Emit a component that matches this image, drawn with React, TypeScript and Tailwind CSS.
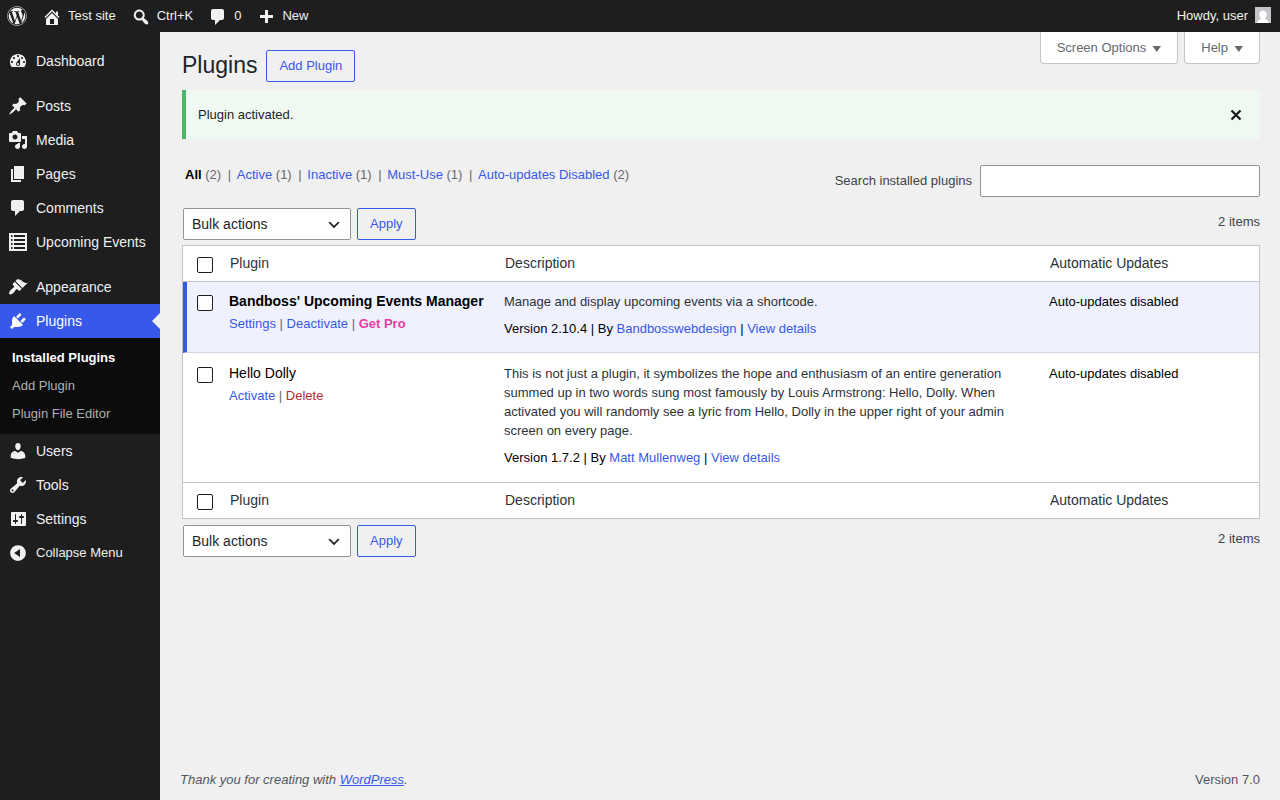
import type { ReactNode } from "react";
import { FaWordpress } from "react-icons/fa";

const ICONS = {
  dashboard:
    "M3.76 16h12.48c1.1-1.37 1.76-3.11 1.76-5 0-4.42-3.58-8-8-8s-8 3.58-8 8c0 1.89.66 3.63 1.76 5zM10 4c.55 0 1 .45 1 1s-.45 1-1 1-1-.45-1-1 .45-1 1-1zM6 6c.55 0 1 .45 1 1s-.45 1-1 1-1-.45-1-1 .45-1 1-1zm8 0c.55 0 1 .45 1 1s-.45 1-1 1-1-.45-1-1 .45-1 1-1zm-5.37 5.55L12 7v6c0 1.1-.9 2-2 2s-2-.9-2-2c0-.57.24-1.08.63-1.45zM4 10c.55 0 1 .45 1 1s-.45 1-1 1-1-.45-1-1 .45-1 1-1zm12 0c.55 0 1 .45 1 1s-.45 1-1 1-1-.45-1-1 .45-1 1-1zm-5 3c0-.55-.45-1-1-1s-1 .45-1 1 .45 1 1 1 1-.45 1-1z",
  post: "M10.44 3.02l1.82-1.82 6.36 6.35-1.83 1.82c-1.05-.68-2.48-.57-3.41.36l-.75.75c-.92.93-1.04 2.35-.35 3.41l-1.83 1.82-2.41-2.41-2.8 2.79c-.42.42-3.38 2.71-3.8 2.29s1.86-3.39 2.28-3.81l2.79-2.79L4.1 9.36l1.83-1.82c1.05.69 2.48.57 3.4-.36l.75-.75c.93-.92 1.05-2.35.36-3.41z",
  media:
    "M13 11V4c0-.55-.45-1-1-1h-1.67L9 1H5L3.67 3H2c-.55 0-1 .45-1 1v7c0 .55.45 1 1 1h10c.55 0 1-.45 1-1zM7 4.5c1.38 0 2.5 1.12 2.5 2.5S8.38 9.5 7 9.5 4.5 8.38 4.5 7 5.62 4.5 7 4.5zM14 6h5v10.5c0 1.38-1.12 2.5-2.5 2.5S14 17.88 14 16.5s1.12-2.5 2.5-2.5c.17 0 .34.02.5.05V9h-3V6zm-4 8.05V13h2v3.5c0 1.38-1.12 2.5-2.5 2.5S7 17.88 7 16.5 8.12 14 9.5 14c.17 0 .34.02.5.05z",
  page: "M6 15V2h10v13H6zm-1 1h8v2H3V5h2v11z",
  comments: "M5 2h9c1.1 0 2 .9 2 2v7c0 1.1-.9 2-2 2h-2l-5 5v-5H5c-1.1 0-2-.9-2-2V4c0-1.1.9-2 2-2z",
  list: "M1 1h18v18H1zM3 3v2h1.500V3zM6 3v2h11V3zM3 7v2h1.500V7zM6 7v2h11V7zM3 11v2h1.500v-2zM6 11v2h11v-2zM3 15v2h1.500v-2zM6 15v2h11v-2z",
  appearance:
    "M14.48 11.06L7.41 3.99l1.5-1.5c.5-.56 2.3-.47 3.51.32 1.21.8 1.43 1.28 2.91 2.1 1.18.64 2.45 1.26 4.45.85zm-.71.71L6.7 4.7 4.93 6.47c-.39.39-.39 1.02 0 1.41l1.06 1.06c.39.39.39 1.03 0 1.42-.6.6-1.43 1.11-2.21 1.69-.35.26-.7.53-1.01.84C1.43 14.23.4 16.08 1.4 17.07c.99 1 2.84-.03 4.18-1.36.31-.31.58-.66.85-1.02.57-.78 1.08-1.61 1.69-2.21.39-.39 1.02-.39 1.41 0l1.06 1.06c.39.39 1.02.39 1.41 0z",
  plugins:
    "M13.11 4.36L9.87 7.6 8 5.73l3.24-3.24c.35-.34 1.05-.2 1.56.32.52.51.66 1.21.31 1.55zm-8 1.77l.91-1.12 9.01 9.01-1.19.84c-.71.71-2.63 1.16-3.82 1.16H6.14L4.9 17.26c-.59.59-1.54.59-2.12 0-.59-.58-.59-1.53 0-2.12l1.24-1.24v-3.88c0-1.13.4-3.19 1.09-3.89zm7.26 3.97l3.24-3.24c.34-.35 1.04-.21 1.55.31.52.51.66 1.21.31 1.55l-3.24 3.25z",
  users:
    "M10 9.25c-2.27 0-2.73-3.44-2.73-3.44C7 4.02 7.82 2 9.97 2c2.16 0 2.98 2.02 2.71 3.81 0 0-.41 3.44-2.68 3.44zm0 2.57L12.72 10c2.39 0 4.52 2.33 4.52 4.53v2.49s-3.65 1.13-7.24 1.13c-3.65 0-7.24-1.13-7.24-1.13v-2.49c0-2.25 1.94-4.48 4.47-4.48z",
  tools:
    "M16.68 9.77c-1.34 1.34-3.3 1.67-4.95.99l-5.41 6.52c-.99.99-2.59.99-3.58 0s-.99-2.59 0-3.57l6.52-5.42c-.68-1.65-.35-3.61.99-4.95 1.28-1.28 3.12-1.62 4.72-1.06l-2.89 2.89 2.82 2.82 2.86-2.87c.53 1.58.18 3.39-1.08 4.65zM3.81 16.21c.4.39 1.04.39 1.43 0 .4-.4.4-1.04 0-1.43-.39-.4-1.03-.4-1.43 0-.39.39-.39 1.03 0 1.43z",
  settings:
    "M18 16V4c0-.55-.45-1-1-1H4c-.55 0-1 .45-1 1v12c0 .55.45 1 1 1h13c.55 0 1-.45 1-1zM8 11h1c.55 0 1 .45 1 1s-.45 1-1 1H8v1.5c0 .28-.22.5-.5.5s-.5-.22-.5-.5V13H6c-.55 0-1-.45-1-1s.45-1 1-1h1V5.500c0-.28.22-.5.5-.5s.5.22.5.5V11zm5-2h-1c-.55 0-1-.45-1-1s.45-1 1-1h1V5.500c0-.28.22-.5.5-.5s.5.22.5.5V7h1c.55 0 1 .45 1 1s-.45 1-1 1h-1v5.500c0 .28-.22.5-.5.5s-.5-.22-.5-.5V9z",
  collapse:
    "M10 2.16c4.33 0 7.84 3.51 7.84 7.84s-3.51 7.84-7.84 7.84S2.16 14.33 2.16 10 5.71 2.16 10 2.16zm2 11.72V6.12L6.18 9.97z",
  home: "M16 8.5l1.53 1.53-1.06 1.06L10 4.6l-6.47 6.49-1.06-1.06L10 2.5l4 4v-2h2v4zm-6-2.46l6 5.99V18H4v-5.97zM12 17v-5H8v5h4z",
  search:
    "M12.14 4.18c1.87 1.87 2.11 4.75.72 6.89.12.1.22.21.36.31.2.16.47.36.81.59.34.24.56.39.66.47.42.31.73.57.94.78.32.32.6.65.84 1 .25.35.44.69.59 1.04.14.35.21.68.18 1-.02.32-.14.59-.36.81s-.49.34-.81.36c-.31.02-.65-.04-.99-.19-.35-.14-.7-.34-1.04-.59-.35-.24-.68-.52-1-.84-.21-.21-.47-.52-.77-.93-.1-.13-.25-.35-.47-.66-.22-.32-.4-.57-.56-.78-.16-.2-.29-.35-.44-.5-2.07 1.09-4.69.76-6.44-.98-2.14-2.15-2.14-5.64 0-7.78 2.15-2.15 5.63-2.15 7.78 0zm-1.41 6.36c1.36-1.37 1.36-3.58 0-4.95-1.37-1.37-3.59-1.37-4.95 0-1.37 1.37-1.37 3.58 0 4.95 1.36 1.37 3.58 1.37 4.95 0z",
  plus: "M17 8v3h-5v5H9v-5H4V8h5V3h3v5h5z",
};

type IconName = keyof typeof ICONS;

const MENU_GROUPS: { label: string; icon: IconName }[][] = [
  [{ label: "Dashboard", icon: "dashboard" }],
  [
    { label: "Posts", icon: "post" },
    { label: "Media", icon: "media" },
    { label: "Pages", icon: "page" },
    { label: "Comments", icon: "comments" },
    { label: "Upcoming Events", icon: "list" },
  ],
  [
    { label: "Appearance", icon: "appearance" },
    { label: "Plugins", icon: "plugins" },
    { label: "Users", icon: "users" },
    { label: "Tools", icon: "tools" },
    { label: "Settings", icon: "settings" },
  ],
];

const SUBMENU = ["Installed Plugins", "Add Plugin", "Plugin File Editor"];

const TOOLBAR: { label: string; icon: IconName }[] = [
  { label: "Test site", icon: "home" },
  { label: "Ctrl+K", icon: "search" },
  { label: "0", icon: "comments" },
  { label: "New", icon: "plus" },
];

const FILTERS = [
  { label: "All", count: 2 },
  { label: "Active", count: 1 },
  { label: "Inactive", count: 1 },
  { label: "Must-Use", count: 1 },
  { label: "Auto-updates Disabled", count: 2 },
];

const PLUGINS = [
  {
    name: "Bandboss' Upcoming Events Manager",
    active: true,
    actions: [
      { label: "Settings", color: "text-[#3858e9]" },
      { label: "Deactivate", color: "text-[#3858e9]" },
      { label: "Get Pro", color: "font-bold text-[#eb3aa3]" },
    ],
    description: "Manage and display upcoming events via a shortcode.",
    version: "2.10.4",
    author: "Bandbosswebdesign",
  },
  {
    name: "Hello Dolly",
    active: false,
    actions: [
      { label: "Activate", color: "text-[#3858e9]" },
      { label: "Delete", color: "text-[#b32d2e]" },
    ],
    description:
      "This is not just a plugin, it symbolizes the hope and enthusiasm of an entire generation summed up in two words sung most famously by Louis Armstrong: Hello, Dolly. When activated you will randomly see a lyric from Hello, Dolly in the upper right of your admin screen on every page.",
    version: "1.7.2",
    author: "Matt Mullenweg",
  },
];

function Icon({ name }: { name: IconName }) {
  return (
    <svg viewBox="0 0 20 20" className="size-5 shrink-0" fill="currentColor" fillRule="evenodd" aria-hidden="true">
      <path d={ICONS[name]} />
    </svg>
  );
}

function Link({ children, className = "text-[#3858e9]" }: { children: ReactNode; className?: string }) {
  return (
    <a href="#" className={className}>
      {children}
    </a>
  );
}

function Checkbox({ label }: { label: string }) {
  return (
    <input
      type="checkbox"
      aria-label={label}
      className="block size-4 appearance-none rounded-xs border border-[#1e1e1e] bg-white checked:bg-[#3858e9]"
    />
  );
}

function BulkActions() {
  return (
    <div className="flex items-start justify-between pl-px">
      <div className="flex gap-1.5">
        <div className="relative">
          <select
            aria-label="Select bulk action"
            className="h-8 w-42 appearance-none rounded-xs border border-[#949494] bg-white px-2 text-sm text-[#1e1e1e]"
          >
            <option>Bulk actions</option>
            <option>Activate</option>
            <option>Deactivate</option>
            <option>Update</option>
            <option>Delete</option>
          </select>
          <svg
            viewBox="0 0 20 20"
            className="pointer-events-none absolute top-[9px] right-[9px] size-4"
            fill="#1e1e1e"
            aria-hidden="true"
          >
            <path d="M5 6l5 5 5-5 2 1-7 7-7-7 2-1z" />
          </svg>
        </div>
        <button className="h-8 rounded-xs border border-[#3858e9] px-3 text-[#3858e9]">Apply</button>
      </div>
      <span className="pt-1 leading-5 text-[#3c434a]">2 items</span>
    </div>
  );
}

function HeadingRow({ position }: { position: "top" | "bottom" }) {
  const border = position === "top" ? "border-b border-[#c3c4c7]" : "border-t border-[#c3c4c7]";

  return (
    <tr className="h-9 align-top text-sm text-[#2c3338]">
      <td className={`pt-[11px] pl-3.5 ${border}`}>
        <Checkbox label={`Select all (${position})`} />
      </td>
      <th scope="col" className={`pt-[7px] pl-[9px] text-left font-normal ${border}`}>
        Plugin
      </th>
      <th scope="col" className={`pt-[7px] pl-[9px] text-left font-normal ${border}`}>
        Description
      </th>
      <th scope="col" className={`pt-[7px] pl-[9px] text-left font-normal ${border}`}>
        Automatic Updates
      </th>
    </tr>
  );
}

function ScreenTab({ children }: { children: ReactNode }) {
  return (
    <button className="flex h-8 items-center gap-1.5 rounded-b-sm border border-t-0 border-[#c3c4c7] bg-white px-4 text-[#646970]">
      {children}
      <svg viewBox="0 0 9 6" className="mt-0.5 h-1.5 w-[9px]" fill="currentColor" aria-hidden="true">
        <path d="M.5 0h8.500L4.800 6z" />
      </svg>
    </button>
  );
}

function Toolbar() {
  return (
    <header className="flex h-8 items-center justify-between bg-[#1e1e1e] pr-2 pl-[7px] text-[#f0f0f0]">
      <nav className="flex items-center gap-[15px]" aria-label="Toolbar">
        <a href="#" aria-label="About WordPress">
          <FaWordpress className="size-5" />
        </a>
        {TOOLBAR.map((item) => (
          <a key={item.label} href="#" className="flex items-center gap-1.5">
            <span className="pt-0.5">
              <Icon name={item.icon} />
            </span>
            {item.label}
          </a>
        ))}
      </nav>
      <a href="#" className="flex items-center gap-1.5">
        Howdy, user
        <svg viewBox="0 0 18 18" className="size-[18px]" aria-hidden="true">
          <path d="M1 0h16v16H1z" fill="#c3c4c7" />
          <path
            d="M9 3.500c2.300 0 3.800 1.700 3.800 4 0 1.700-.8 3-1.600 3.800v.7c1.800.5 3.300 1.500 3.800 4H3c.5-2.500 2-3.500 3.800-4v-.7C6 10.500 5.200 9.200 5.200 7.500c0-2.300 1.500-4 3.800-4z"
            fill="#fff"
          />
        </svg>
      </a>
    </header>
  );
}

function Sidebar() {
  return (
    <nav className="w-40 shrink-0 bg-[#1e1e1e] pt-3 text-sm text-[#f0f0f0]" aria-label="Main menu">
      {MENU_GROUPS.map((group, idx) => (
        <ul key={idx} className={idx < MENU_GROUPS.length - 1 ? "mb-[11px]" : ""}>
          {group.map((item) => {
            const current = item.label === "Plugins";
            return (
              <li key={item.label}>
                <a
                  href="#"
                  className={`relative flex h-[34px] items-center gap-2 pl-2 ${current ? "bg-[#3858e9] text-white" : ""}`}
                >
                  <Icon name={item.icon} />
                  {item.label}
                  {current && (
                    <span className="absolute top-1/2 right-0 -translate-y-1/2 border-8 border-l-0 border-transparent border-r-[#f0f0f0]" />
                  )}
                </a>
                {current && (
                  <ul className="bg-[#0c0c0c] py-1.5 text-[13px] text-[#b0b0b0]">
                    {SUBMENU.map((label, i) => (
                      <li key={label}>
                        <a
                          href="#"
                          className={`flex h-7 items-center px-3 ${i === 0 ? "font-bold text-white" : ""}`}
                        >
                          {label}
                        </a>
                      </li>
                    ))}
                  </ul>
                )}
              </li>
            );
          })}
        </ul>
      ))}
      <button className="flex h-[34px] items-center gap-2 pl-2 text-[13px]">
        <Icon name="collapse" />
        Collapse Menu
      </button>
    </nav>
  );
}

export default function App() {
  return (
    <div className="flex min-h-screen flex-col bg-[#f0f0f0] font-['Liberation_Sans',Arial,sans-serif] text-[13px] text-[#3c434a]">
      <Toolbar />
      <div className="flex flex-1">
        <Sidebar />
        <div className="flex min-w-0 flex-1 flex-col px-5">
          <main className="flex-1 pl-0.5">
            <div className="flex items-start justify-between">
              <div className="flex items-start gap-[9px] pt-[18px]">
                <h1 className="text-[23px] leading-[30px] text-[#1d2327]">Plugins</h1>
                <a
                  href="#"
                  className="flex h-8 items-center rounded-xs border border-[#3858e9] px-3 text-[#3858e9]"
                >
                  Add Plugin
                </a>
              </div>
              <div className="flex gap-1.5">
                <ScreenTab>Screen Options</ScreenTab>
                <ScreenTab>Help</ScreenTab>
              </div>
            </div>

            {/* Notice */}
            <div className="mt-2 flex h-[49px] items-center justify-between border-l-4 border-[#4ab866] bg-[#eff9f1] pr-[18px] pl-3 text-[#1e1e1e]">
              <p>Plugin activated.</p>
              <button aria-label="Dismiss this notice">
                <svg viewBox="0 0 12 12" className="size-3" stroke="currentColor" strokeWidth="2.4" aria-hidden="true">
                  <path d="M1.500 1.500l9 9M10.500 1.500l-9 9" />
                </svg>
              </button>
            </div>

            {/* Filters & search */}
            <div className="mt-[26px] flex items-start justify-between">
              <ul className="flex pl-[3px] leading-5 text-[#646970]">
                {FILTERS.map((filter, idx) => (
                  <li key={filter.label} className="flex">
                    {idx > 0 && <span className="pr-0.5 pl-[3px] whitespace-pre">{" | "}</span>}
                    <span>
                      <Link className={idx === 0 ? "font-bold text-black" : "text-[#3858e9]"}>{filter.label}</Link> (
                      {filter.count})
                    </span>
                  </li>
                ))}
              </ul>
              <div className="flex items-center gap-2">
                <label htmlFor="plugin-search">Search installed plugins</label>
                <input
                  id="plugin-search"
                  type="search"
                  className="h-8 w-70 rounded-xs border border-[#949494] bg-white px-2 text-sm"
                />
              </div>
            </div>

            <div className="mt-[11px]">
              <BulkActions />
            </div>

            {/* Plugin list */}
            <div className="mt-[5px] mb-1.5 border border-[#c3c4c7] bg-white">
              <table className="w-full table-fixed border-separate border-spacing-0">
                <colgroup>
                  <col className="w-[38px]" />
                  <col className="w-[275px]" />
                  <col />
                  <col className="w-[218px]" />
                </colgroup>
                <thead>
                  <HeadingRow position="top" />
                </thead>
                <tbody>
                  {PLUGINS.map((plugin) => {
                    const cell = plugin.active ? "border-b border-b-[#d5d7e6] pt-2.5 pb-3.5" : "pt-[11px] pb-[15px]";
                    return (
                      <tr key={plugin.name} className={`align-top ${plugin.active ? "bg-[#eff1fe]" : ""}`}>
                        <td className={`${cell} ${plugin.active ? "border-l-4 border-l-[#3858e9] pl-2.5" : "pl-3.5"}`}>
                          <div className="pt-[3px]">
                            <Checkbox label={`Select ${plugin.name}`} />
                          </div>
                        </td>
                        <td className={`${cell} pl-2`}>
                          <div className={`text-sm leading-[19px] text-black ${plugin.active ? "font-bold" : ""}`}>
                            {plugin.name}
                          </div>
                          <div className="pt-[3px] leading-[19px] text-[#646970]">
                            {plugin.actions.map((action, i) => (
                              <span key={action.label}>
                                {i > 0 && " | "}
                                <Link className={action.color}>{action.label}</Link>
                              </span>
                            ))}
                          </div>
                        </td>
                        <td className={`${cell} pr-2.5 pl-2 leading-[19px]`}>
                          <p className="text-[#2c3338]">{plugin.description}</p>
                          <p className="pt-2 text-black">
                            Version {plugin.version} | By <Link>{plugin.author}</Link> | <Link>View details</Link>
                          </p>
                        </td>
                        <td className={`${cell} pl-2 leading-[19px] text-black`}>Auto-updates disabled</td>
                      </tr>
                    );
                  })}
                </tbody>
                <tfoot>
                  <HeadingRow position="bottom" />
                </tfoot>
              </table>
            </div>

            <BulkActions />
          </main>

          <footer className="flex justify-between pb-2.5 leading-5 text-[#50575e]">
            <p className="italic">
              Thank you for creating with <Link className="text-[#3858e9] underline">WordPress</Link>.
            </p>
            <p>Version 7.0</p>
          </footer>
        </div>
      </div>
    </div>
  );
}
